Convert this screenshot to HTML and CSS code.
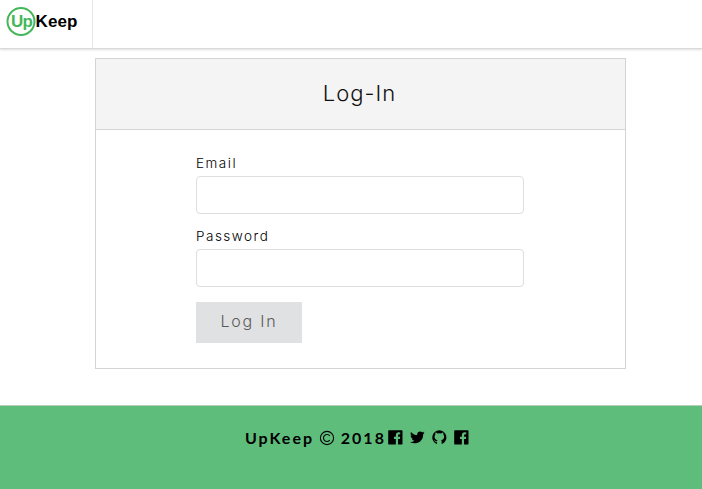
FILE: index.html
```html
<!DOCTYPE html>
<html lang="en">
<head>
<meta charset="utf-8">
<title>UpKeep</title>
<link rel="stylesheet" href="styles.css">
</head>
<body>
<nav class="nav">
  <a class="brand">
    <svg class="logo" viewBox="0 0 80 40" width="80" height="40">
      <circle cx="21" cy="21.5" r="13.5" fill="none" stroke="#45b75b" stroke-width="2"/>
      <text x="11" y="27" textLength="22" class="logo-up">Up</text>
      <text x="35.5" y="27" textLength="42" class="logo-keep">Keep</text>
    </svg>
  </a>
</nav>
<main class="card">
  <h1 class="card-title"><span>Log-In</span></h1>
  <form class="form">
    <label class="label" for="email">Email</label>
    <input class="input" id="email" type="email">
    <label class="label" for="password">Password</label>
    <input class="input" id="password" type="password">
    <button class="button" type="button">Log In</button>
  </form>
</main>
<footer class="footer">
  <span class="copy">UpKeep <svg class="copyright" viewBox="0 0 16 16" width="16" height="16" role="img" aria-label="Copyright"><circle cx="8" cy="8" r="6.6"/><path d="M10.8 5.900A3.500 3.500 0 1 0 10.800 10.100"/></svg> 2018</span>
  <span class="icons">
    <svg class="icon" viewBox="0 0 1792 1792"><path d="M1579 128q35 0 60 25t25 60v1366q0 35-25 60t-60 25h-391v-595h199l30-232h-229v-148q0-56 23.500-84t91.500-28l122-1v-207q-63-9-178-9-136 0-217.500 80t-81.500 226v171h-200v232h200v595h-735q-35 0-60-25t-25-60v-1366q0-35 25-60t60-25h1366z"/></svg>
    <svg class="icon" viewBox="0 0 1792 1792"><path d="M1684 408q-67 98-162 167 1 14 1 42 0 130-38 259.500t-115.500 248.500-184.500 210.500-258 146-323 54.500q-271 0-496-145 35 4 78 4 225 0 401-138-105-2-188-64.500t-114-159.500q33 5 61 5 43 0 85-11-112-23-185.500-111.500t-73.500-205.500v-4q68 38 146 41-66-44-105-115t-39-154q0-88 44-163 121 149 294.500 238.500t371.500 99.500q-8-38-8-74 0-134 94.500-228.500t228.500-94.500q140 0 236 102 109-21 205-78-37 115-142 178 93-10 186-50z"/></svg>
    <svg class="icon" viewBox="0 0 16 16"><path d="M8 1.1A6.9 6.9 0 0 1 10.200 14.500V12c0-.7-.2-1-.5-1.300c1.900-.2 2.900-1.300 2.900-3.400c0-.8-.3-1.500-.8-2c.2-.7.1-1.400-.1-1.900c-.7 0-1.400.4-1.900.8a7 7 0 0 0-3.600 0c-.5-.4-1.200-.8-1.900-.8c-.2.5-.3 1.200-.1 1.900c-.5.5-.8 1.200-.8 2c0 2.100 1 3.200 2.900 3.400c-.3.3-.5.6-.5 1.100c-1 .3-1.600-.1-2-.8c-.3-.5-.7-.6-1-.5c.7.5.8 2.300 3 2.200V14.500A6.900 6.900 0 0 1 8 1.100z"/></svg>
    <svg class="icon" viewBox="0 0 1792 1792"><path d="M1579 128q35 0 60 25t25 60v1366q0 35-25 60t-60 25h-391v-595h199l30-232h-229v-148q0-56 23.500-84t91.500-28l122-1v-207q-63-9-178-9-136 0-217.500 80t-81.500 226v171h-200v232h200v595h-735q-35 0-60-25t-25-60v-1366q0-35 25-60t60-25h1366z"/></svg>
  </span>
</footer>
</body>
</html>
```
FILE: styles.css
```css
* { box-sizing: border-box; }

body {
  margin: 0;
  min-height: 489px;
  display: flex;
  flex-direction: column;
  background: #fff;
  color: #111;
  font-family: Inter, "Liberation Sans", sans-serif;
  font-weight: 300;
}

.nav {
  display: flex;
  height: 49px;
  border-bottom: 1px solid #d9d9da;
  box-shadow: 0 1px 2px rgba(34, 36, 38, .15);
}

.brand {
  width: 93px;
  border-right: 1px solid #e8e8e9;
}

.logo { display: block; }

.logo-up,
.logo-keep {
  font: bold 17px "Liberation Sans", sans-serif;
}

.logo-up { fill: #45b75b; }
.logo-keep { fill: #000; }

.card {
  width: 531px;
  height: 311px;
  margin: 9px 0 36px 95px;
  border: 1px solid #d4d4d5;
}

.card-title {
  display: flex;
  align-items: center;
  justify-content: center;
  height: 71px;
  margin: 0;
  padding: 0 2px 2px 0;
  background: #f4f4f4;
  border-bottom: 1px solid #d4d4d5;
  font-size: 22px;
  font-weight: 300;
  letter-spacing: 1px;
}

.form {
  display: flex;
  flex-direction: column;
  width: 328px;
  margin: 24px 0 0 100px;
}

.label {
  height: 22px;
  color: #000;
  font-size: 13.500px;
  line-height: 19px;
  letter-spacing: 1.500px;
}

.input {
  width: 328px;
  height: 38px;
  margin: 0 0 13px;
  padding: 0 14px;
  border: 1px solid #dededf;
  border-radius: 4px;
  background: #fff;
}

.button {
  width: 106px;
  height: 41px;
  margin-top: 2px;
  padding: 0 0 4px;
  border: 0;
  background: #e0e1e2;
  color: #5b5b5c;
  font: 300 16px Inter, "Liberation Sans", sans-serif;
  letter-spacing: 1.800px;
}

.footer {
  display: flex;
  flex: 1;
  align-items: flex-start;
  padding: 23px 0 0 245px;
  background: #5fbd7c;
  border-top: 1px solid #b5ceb9;
  color: #000;
}

.copy {
  width: 141.500px;
  font: bold 16px/18px Lato, sans-serif;
  letter-spacing: 2px;
  white-space: nowrap;
}

.copyright {
  margin: 0 -.500px 0 -.500px;
  vertical-align: -2px;
  fill: none;
  stroke: #000;
  stroke-width: 1.100;
}

.icons {
  display: flex;
  gap: 5.500px;
}

.icon {
  width: 16.700px;
  height: 16.700px;
}
```
